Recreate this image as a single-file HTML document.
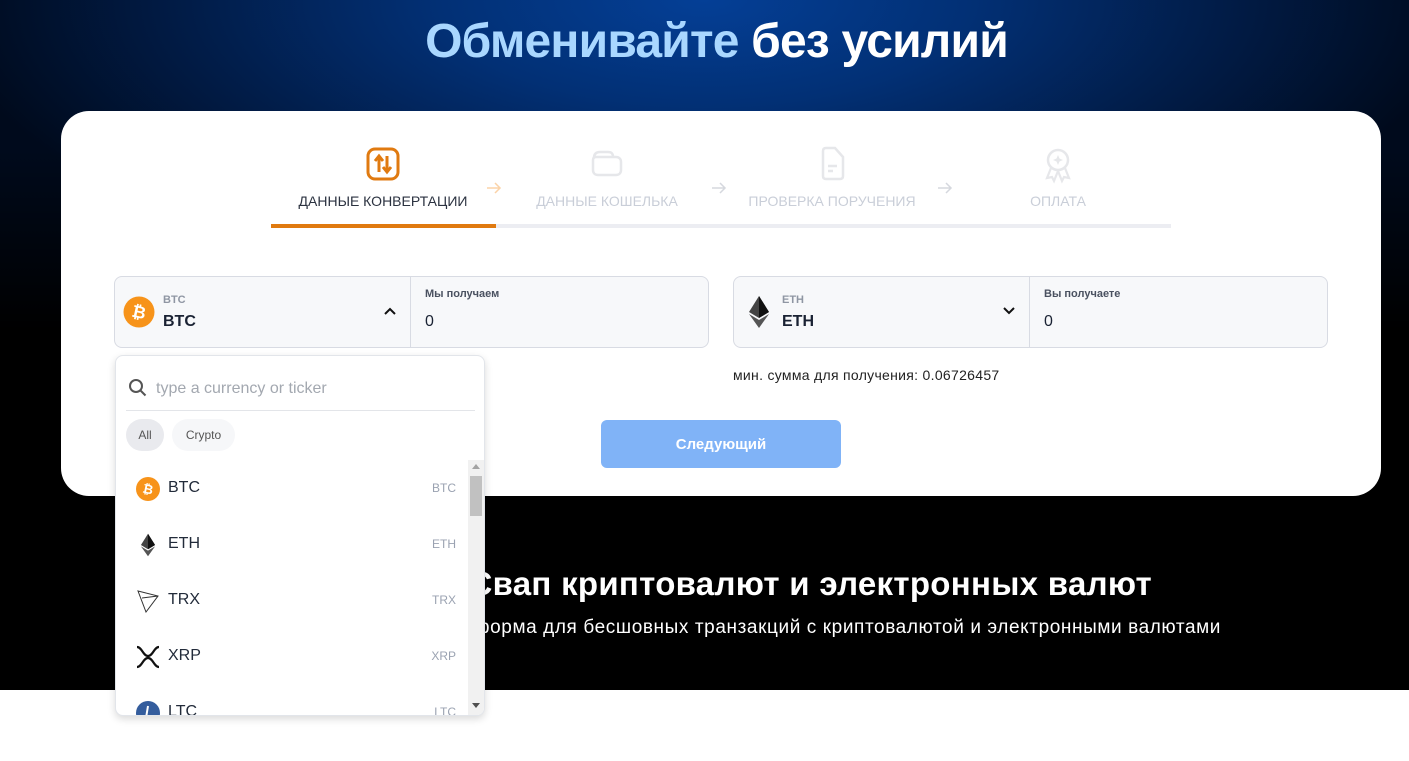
<!DOCTYPE html>
<html><head><meta charset="utf-8"><style>
*{box-sizing:border-box;margin:0;padding:0}
body{width:1409px;height:761px;overflow:hidden;background:#fff;font-family:"Liberation Sans",sans-serif;position:relative}
.top{position:absolute;left:0;top:0;width:1409px;height:690px;background:#000}
.grad{position:absolute;left:0;top:0;width:1409px;height:330px;background:radial-gradient(ellipse 760px 300px at 704px 0px,#043f96 0%,#023075 35%,#011b45 70%,#000a1c 100%)}
.grad:after{content:"";position:absolute;left:0;top:150px;width:100%;height:180px;background:linear-gradient(rgba(0,0,0,0),#000)}
h1{position:absolute;left:12px;width:1409px;top:14px;text-align:center;font-size:48px;font-weight:bold;color:#fff;letter-spacing:-0.8px}
h1 span{color:#a9d7ff}
.card{position:absolute;left:61px;top:111px;width:1320px;height:385px;background:#fff;border-radius:28px}
.abs{position:absolute}
.lbl{position:absolute;top:193px;font-size:14px;color:#c9ced8;white-space:nowrap;transform:translateX(-50%)}
.box{position:absolute;top:276px;height:72px;background:#f7f8fa;border:1px solid #d8dbe3;border-radius:8px}
.small{font-size:11px;color:#8f96a3;font-weight:bold}
.big{font-size:16px;color:#1a2233;font-weight:bold}
.dd{position:absolute;left:115px;top:355px;width:370px;height:361px;background:#fff;border:1px solid #e2e5ea;border-radius:8px;box-shadow:0 3px 8px rgba(0,0,0,.15);overflow:hidden}
.item{position:absolute;left:20px;width:320px;height:30px}
.item .n{position:absolute;left:32px;top:5px;font-size:16px;color:#222b3a}
.item .t{position:absolute;right:0;top:7px;font-size:12px;color:#9aa2b1}
.item svg{position:absolute;left:0;top:3px}
</style></head><body>
<div class="top"><div class="grad"></div></div>
<h1><span>Обменивайте</span> без усилий</h1>
<div class="abs" style="left:200px;width:952px;top:565px;text-align:right;font-size:33px;font-weight:bold;color:#fff;white-space:nowrap;letter-spacing:.3px">Свап криптовалют и электронных валют</div>
<div class="abs" style="left:200px;width:1021px;top:617px;text-align:right;font-size:19px;color:#fff;white-space:nowrap;letter-spacing:.6px">Платформа для бесшовных транзакций с криптовалютой и электронными валютами</div>
<div class="card"></div>
<svg class="abs" style="left:366px;top:147px" width="34" height="34" viewBox="0 0 34 34"><rect x="2" y="2" width="30" height="30" rx="7" fill="none" stroke="#e07a10" stroke-width="3"/><path d="M13 25V10M9 14l4-5 4 5M21 9v15M17 20l4 5 4-5" stroke="#e07a10" stroke-width="3" fill="none"/></svg>
<svg class="abs" style="left:590px;top:148px" width="34" height="30" viewBox="0 0 34 30"><path d="M4 10c0-4 2-6 6-6h8c4 0 5 2 5 5M3 12c0-2 1-3 3-3h20c3 0 5 2 5 5v8c0 3-2 5-5 5H8c-3 0-5-2-5-5z" fill="none" stroke="#e6e7ea" stroke-width="2.5"/></svg>
<svg class="abs" style="left:820px;top:146px" width="26" height="36" viewBox="0 0 26 36"><path d="M3 5c0-2 1-3 3-3h9l8 9v19c0 2-1 3-3 3H6c-2 0-3-1-3-3z" fill="none" stroke="#e6e7ea" stroke-width="2.5"/><path d="M8 20h9M8 25h5" stroke="#e6e7ea" stroke-width="2.5"/></svg>
<svg class="abs" style="left:1042px;top:146px" width="32" height="38" viewBox="0 0 32 38"><circle cx="16" cy="14" r="10" fill="none" stroke="#e6e7ea" stroke-width="2.5"/><path d="M16 9l1.5 3.5L21 14l-3.5 1.5L16 19l-1.5-3.5L11 14l3.5-1.5z" fill="#e6e7ea"/><path d="M9 22l-4 10 5-1 2 4 4-10M23 22l4 10-5-1-2 4-4-10" fill="none" stroke="#e6e7ea" stroke-width="2.2"/></svg>
<div class="lbl" style="left:383px;color:#2b3240">ДАННЫЕ КОНВЕРТАЦИИ</div>
<div class="lbl" style="left:607px">ДАННЫЕ КОШЕЛЬКА</div>
<div class="lbl" style="left:832px">ПРОВЕРКА ПОРУЧЕНИЯ</div>
<div class="lbl" style="left:1058px">ОПЛАТА</div>
<svg class="abs" style="left:486px;top:180px" width="16" height="16" viewBox="0 0 16 16"><path d="M1 8h13M9 3l5 5-5 5" fill="none" stroke="#fbd3a8" stroke-width="1.5"/></svg>
<svg class="abs" style="left:711px;top:180px" width="16" height="16" viewBox="0 0 16 16"><path d="M1 8h13M9 3l5 5-5 5" fill="none" stroke="#d5d8de" stroke-width="1.5"/></svg>
<svg class="abs" style="left:937px;top:180px" width="16" height="16" viewBox="0 0 16 16"><path d="M1 8h13M9 3l5 5-5 5" fill="none" stroke="#d5d8de" stroke-width="1.5"/></svg>
<div class="abs" style="left:271px;top:224px;width:900px;height:4px;background:#ecedf2"></div>
<div class="abs" style="left:271px;top:224px;width:225px;height:4px;background:#e07a10"></div>
<div class="box" style="left:114px;width:595px"></div>
<div class="abs" style="left:410px;top:277px;width:1px;height:70px;background:#d8dbe3"></div>
<svg class="abs" style="left:123px;top:296px" width="32" height="32" viewBox="0 0 32 32"><circle cx="16" cy="16" r="15.5" fill="#f7931a"/><text x="16" y="22" font-size="17" font-weight="bold" fill="#fff" text-anchor="middle" font-family="Liberation Sans" transform="rotate(12 16 16)">₿</text></svg>
<div class="abs small" style="left:163px;top:294px">BTC</div>
<div class="abs big" style="left:163px;top:313px">BTC</div>
<svg class="abs" style="left:383px;top:306px" width="14" height="10" viewBox="0 0 14 10"><path d="M2 8l5-5 5 5" fill="none" stroke="#111" stroke-width="2"/></svg>
<div class="abs small" style="left:425px;top:288px;color:#4a5160">Мы получаем</div>
<div class="abs" style="left:425px;top:313px;font-size:16px;color:#1a2233">0</div>
<div class="box" style="left:733px;width:595px"></div>
<div class="abs" style="left:1029px;top:277px;width:1px;height:70px;background:#d8dbe3"></div>
<svg class="abs" style="left:748px;top:295px" width="22" height="34" viewBox="0 0 22 34"><path d="M11 1L1 17l10 6 10-6z" fill="#444"/><path d="M11 1v22l10-6z" fill="#111"/><path d="M1 19l10 14 10-14-10 6z" fill="#555"/></svg>
<div class="abs small" style="left:782px;top:294px">ETH</div>
<div class="abs big" style="left:782px;top:313px">ETH</div>
<svg class="abs" style="left:1002px;top:306px" width="14" height="10" viewBox="0 0 14 10"><path d="M2 2l5 5 5-5" fill="none" stroke="#111" stroke-width="2"/></svg>
<div class="abs small" style="left:1044px;top:288px;color:#4a5160">Вы получаете</div>
<div class="abs" style="left:1044px;top:313px;font-size:16px;color:#1a2233">0</div>
<div class="abs" style="left:733px;top:367px;font-size:14px;color:#222;letter-spacing:.3px">мин. сумма для получения: 0.06726457</div>
<div class="abs" style="left:601px;top:420px;width:240px;height:48px;background:#80b3f7;border-radius:6px;color:#fff;font-weight:bold;font-size:15px;text-align:center;line-height:50px">Следующий</div>
<div class="dd">
<svg class="abs" style="left:11px;top:21px" width="22" height="22" viewBox="0 0 22 22"><circle cx="9" cy="9" r="6" fill="none" stroke="#555" stroke-width="2"/><path d="M13.5 13.5l5 5" stroke="#555" stroke-width="2"/></svg>
<div class="abs" style="left:40px;top:24px;font-size:16px;color:#a3a8b0">type a currency or ticker</div>
<div class="abs" style="left:10px;top:54px;width:349px;height:1px;background:#e3e5e9"></div>
<div class="abs" style="left:10px;top:63px;width:38px;height:32px;border-radius:16px;background:#e9eaee;font-size:12px;color:#555;text-align:center;line-height:32px">All</div>
<div class="abs" style="left:56px;top:63px;width:63px;height:32px;border-radius:16px;background:#f6f7f9;font-size:12px;color:#555;text-align:center;line-height:32px">Crypto</div>
<div class="item" style="top:118px"><svg width="24" height="24" viewBox="0 0 32 32"><circle cx="16" cy="16" r="16" fill="#f7931a"/><text x="16" y="22" font-size="17" font-weight="bold" fill="#fff" text-anchor="middle" font-family="Liberation Sans" transform="rotate(12 16 16)">₿</text></svg><span class="n">BTC</span><span class="t">BTC</span></div>
<div class="item" style="top:174px"><svg width="24" height="24" viewBox="0 0 22 34"><path d="M11 1L1 17l10 6 10-6z" fill="#444"/><path d="M11 1v22l10-6z" fill="#111"/><path d="M1 19l10 14 10-14-10 6z" fill="#555"/></svg><span class="n">ETH</span><span class="t">ETH</span></div>
<div class="item" style="top:230px"><svg width="24" height="24" viewBox="0 0 24 24"><path d="M2 2l20 5-12 16zM2 2l8 21M22 7L6 9" fill="none" stroke="#333" stroke-width="1"/></svg><span class="n">TRX</span><span class="t">TRX</span></div>
<div class="item" style="top:286px"><svg width="24" height="24" viewBox="0 0 24 24"><path d="M1 2c5 0 6 9 11 9s6-9 11-9M1 22c5 0 6-9 11-9s6 9 11 9" fill="none" stroke="#111" stroke-width="2.2"/></svg><span class="n">XRP</span><span class="t">XRP</span></div>
<div class="item" style="top:342px"><svg width="24" height="24" viewBox="0 0 24 24"><circle cx="12" cy="12" r="12" fill="#345d9d"/><path d="M12 5l-2 12h6" fill="none" stroke="#fff" stroke-width="2"/></svg><span class="n">LTC</span><span class="t">LTC</span></div>
<div class="abs" style="left:352px;top:104px;width:16px;height:256px;background:#f1f1f1"></div>
<div class="abs" style="left:354px;top:120px;width:12px;height:40px;background:#c1c1c1"></div>
<div class="abs" style="left:356px;top:108px;width:0;height:0;border-left:4px solid transparent;border-right:4px solid transparent;border-bottom:5px solid #a3a3a3"></div>
<div class="abs" style="left:356px;top:347px;width:0;height:0;border-left:4px solid transparent;border-right:4px solid transparent;border-top:5px solid #505050"></div>
</div>
</body></html>
